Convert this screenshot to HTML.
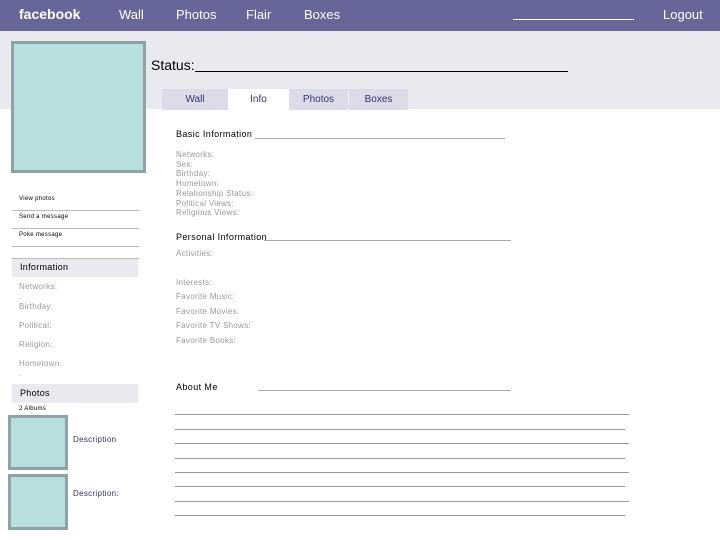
<!DOCTYPE html>
<html><head><meta charset="utf-8"><style>
*{margin:0;padding:0;box-sizing:border-box}
body{width:720px;height:540px;position:relative;background:#fff;font-family:"Liberation Sans",sans-serif;overflow:hidden}
.a{position:absolute;white-space:nowrap}
.hd{left:0;top:0;width:720px;height:31px;background:#666699}
.nav{color:#fff;font-size:13px;top:7px}
.band{left:0;top:31px;width:720px;height:78px;background:#e9e9ef}
.pic{background:#b8dfe0;border:3px solid #8fa3a6}
.tab{top:89px;height:21px;background:#dcdce8;color:#333366;font-size:10px;text-align:center;line-height:21px}
.s{font-size:8px;color:#999;letter-spacing:0.3px}
.b{font-size:9px;color:#000;letter-spacing:0.4px}
.hl{height:1px;background:#aaa}
.ln{height:1px;background:#999}
.sl{height:1px;background:#bbb}
.box{background:#e9e9ef;font-size:9px;color:#000;padding-left:8px;letter-spacing:0.3px}
</style></head><body>
<div class="a hd"></div>
<div class="a nav" style="left:19px;font-weight:bold;font-size:14px;top:6px">facebook</div>
<div class="a nav" style="left:119px">Wall</div>
<div class="a nav" style="left:176px">Photos</div>
<div class="a nav" style="left:246px">Flair</div>
<div class="a nav" style="left:304px">Boxes</div>
<div class="a" style="left:513px;top:19px;width:121px;height:1px;background:#fff"></div>
<div class="a nav" style="left:663px">Logout</div>
<div class="a band"></div>
<div class="a pic" style="left:11px;top:41px;width:135px;height:132px"></div>
<div class="a" style="left:151px;top:57px;font-size:14px;color:#000">Status:</div>
<div class="a" style="left:195px;top:71px;width:373px;height:1px;background:#000"></div>
<div class="a tab" style="left:162px;width:66px">Wall</div>
<div class="a tab" style="left:228px;width:61px;background:#fff">Info</div>
<div class="a tab" style="left:289px;width:59px">Photos</div>
<div class="a tab" style="left:349px;width:59px">Boxes</div>

<div class="a b" style="left:176px;top:129px">Basic Information</div>
<div class="a hl" style="left:255px;top:138px;width:250px"></div>
<div class="a s" style="left:176px;top:150px;line-height:9.7px">Networks:<br>Sex:<br>Birthday:<br>Hometown:<br>Relationship Status:<br>Political Views:<br>Religious Views:</div>
<div class="a b" style="left:176px;top:232px">Personal Information</div>
<div class="a hl" style="left:264px;top:240px;width:247px"></div>
<div class="a s" style="left:176px;top:249px">Activities:</div>
<div class="a s" style="left:176px;top:278px">Interests:</div>
<div class="a s" style="left:176px;top:292px">Favorite Music:</div>
<div class="a s" style="left:176px;top:307px">Favorite Movies:</div>
<div class="a s" style="left:176px;top:321px">Favorite TV Shows:</div>
<div class="a s" style="left:176px;top:336px">Favorite Books:</div>
<div class="a b" style="left:176px;top:382px">About Me</div>
<div class="a hl" style="left:258px;top:390px;width:253px"></div>
<div class="a ln" style="left:175px;top:414px;width:454px"></div>
<div class="a ln" style="left:175px;top:429px;width:450px"></div>
<div class="a ln" style="left:175px;top:443px;width:454px"></div>
<div class="a ln" style="left:175px;top:458px;width:450px"></div>
<div class="a ln" style="left:175px;top:472px;width:454px"></div>
<div class="a ln" style="left:175px;top:486px;width:450px"></div>
<div class="a ln" style="left:175px;top:501px;width:454px"></div>
<div class="a ln" style="left:175px;top:515px;width:450px"></div>

<div class="a" style="left:19px;top:196px;font-size:6px;letter-spacing:0.3px">View photos</div>
<div class="a sl" style="left:12px;top:210px;width:127px"></div>
<div class="a" style="left:19px;top:214px;font-size:6px;letter-spacing:0.3px">Send a message</div>
<div class="a sl" style="left:12px;top:228px;width:127px"></div>
<div class="a" style="left:19px;top:232px;font-size:6px;letter-spacing:0.3px">Poke message</div>
<div class="a sl" style="left:12px;top:246px;width:127px"></div>
<div class="a sl" style="left:12px;top:258px;width:127px"></div>
<div class="a box" style="left:12px;top:259px;width:126px;height:18px;line-height:16px">Information</div>
<div class="a s" style="left:19px;top:282px">Networks:</div>
<div class="a s" style="left:19px;top:292px">.</div>
<div class="a s" style="left:19px;top:302px">Birthday:</div>
<div class="a s" style="left:19px;top:321px">Political:</div>
<div class="a s" style="left:19px;top:340px">Religion:</div>
<div class="a s" style="left:19px;top:359px">Hometown:</div>
<div class="a s" style="left:19px;top:369px">.</div>
<div class="a box" style="left:12px;top:384px;width:126px;height:19px;line-height:19px">Photos</div>
<div class="a" style="left:19px;top:406px;font-size:6px;letter-spacing:0.3px">2 Albums</div>
<div class="a pic" style="left:8px;top:415px;width:60px;height:55px"></div>
<div class="a" style="left:73px;top:435px;font-size:8px;color:#333366;letter-spacing:0.3px">Description</div>
<div class="a pic" style="left:8px;top:474px;width:60px;height:56px"></div>
<div class="a" style="left:73px;top:489px;font-size:8px;color:#333366;letter-spacing:0.3px">Description:</div>
</body></html>
